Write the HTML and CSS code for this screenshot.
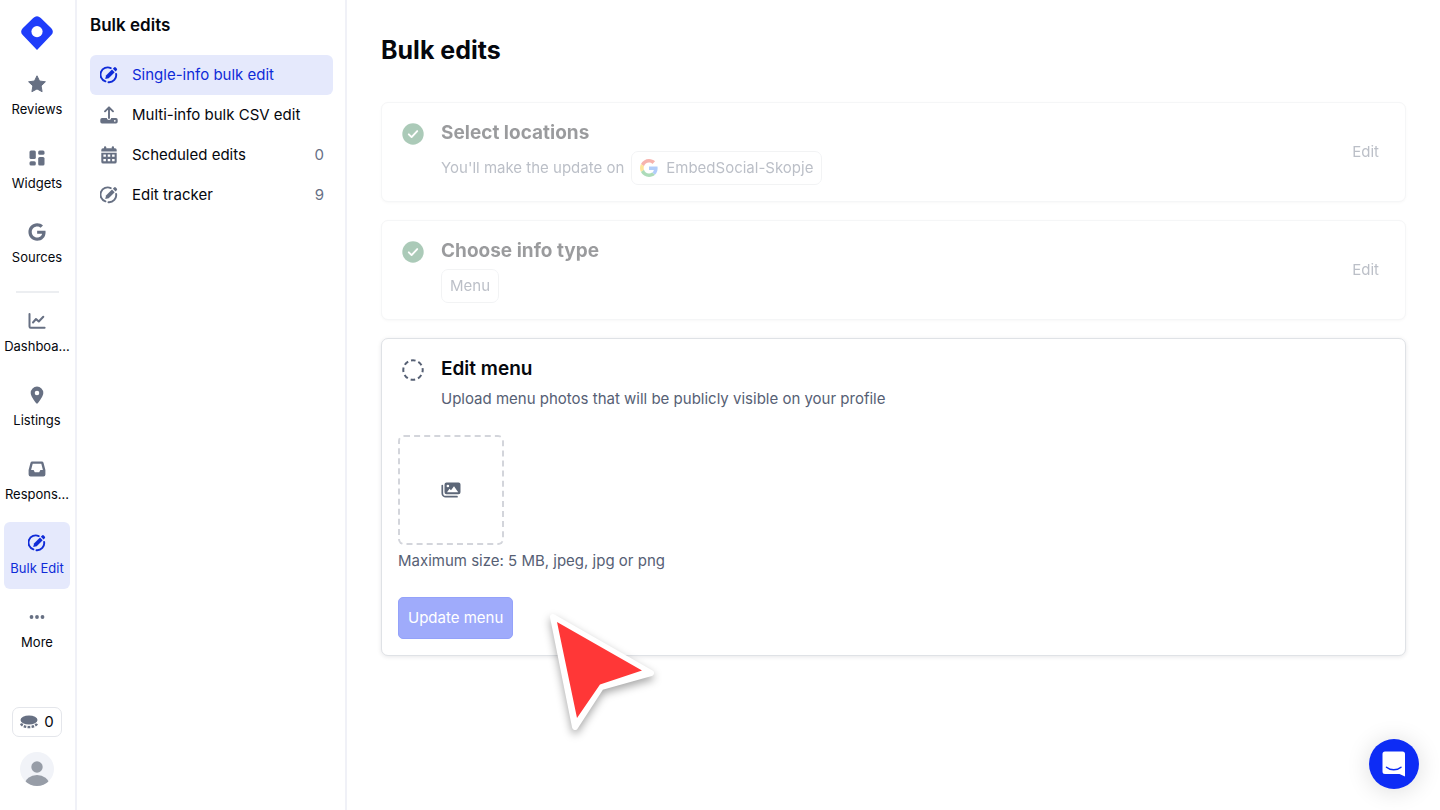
FILE: index.html
```
<!DOCTYPE html>
<html lang="en">
<head>
<meta charset="utf-8">
<title>Bulk edits</title>
<link rel="stylesheet" href="styles.css">
</head>
<body>
<svg class="sprite" aria-hidden="true">
  <symbol id="i-bulk" viewBox="0 0 20 20">
    <path d="M11.9 2.25A8 8 0 1 0 6 17.1M9.4 18A8 8 0 0 0 17.9 8.7" fill="none" stroke="currentColor" stroke-width="2.1" stroke-linecap="round"/>
    <path d="M5.8 14.5 6.7 10.6 13.3 4 16.3 7 9.7 13.6Z" fill="currentColor"/>
    <path d="m14.3 3 1.3-1.3a1.4 1.4 0 0 1 2 0l1 1a1.4 1.4 0 0 1 0 2L17.3 6Z" fill="currentColor"/>
  </symbol>
  <symbol id="i-check" viewBox="0 0 22 22">
    <circle cx="11" cy="11" r="10.7" fill="#2f7d4f"/>
    <path d="m6.8 11.3 2.8 2.8 5.6-6" fill="none" stroke="#fff" stroke-width="1.9" stroke-linecap="round" stroke-linejoin="round"/>
  </symbol>
</svg>
<div class="app">
  <nav class="rail" aria-label="Main">
    <a class="logo" href="#" aria-label="Home">
      <svg width="32" height="34" viewBox="0 0 32 34"><path d="M12.2 2.1Q16-1.6 19.8 2.1L30.3 12.3Q33.4 15.7 30.3 19L16 34 1.7 19Q-1.4 15.7 1.7 12.3Z" fill="#1f3dfa"/><circle cx="16" cy="15.6" r="5.6" fill="#fff"/></svg>
    </a>
    <a class="rail-item" href="#">
      <svg class="rail-icon" viewBox="0 0 18 18"><path d="m9 .8 2.5 5.2 5.9.8-4.3 4.1 1 5.8L9 13.9l-5.1 2.8 1-5.8L.6 6.8 6.5 6Z" fill="currentColor" stroke="currentColor" stroke-width="1" stroke-linejoin="round"/></svg>
      <span class="rail-label">Reviews</span>
    </a>
    <a class="rail-item" href="#">
      <svg class="rail-icon" viewBox="0 0 18 18" fill="currentColor"><rect x="1.5" y="1.5" width="6.3" height="8.4" rx="1.5"/><rect x="10.2" y="1.5" width="6.3" height="4.2" rx="1.5"/><rect x="1.5" y="12.3" width="6.3" height="4.2" rx="1.5"/><rect x="10.2" y="8.1" width="6.3" height="8.4" rx="1.5"/></svg>
      <span class="rail-label">Widgets</span>
    </a>
    <a class="rail-item" href="#">
      <svg class="rail-icon" viewBox="-8 0 504 512"><path fill="currentColor" d="M488 261.800C488 403.300 391.100 504 248 504 110.800 504 0 393.200 0 256S110.800 8 248 8c66.800 0 123 24.500 166.300 64.900l-67.500 64.900C258.500 52.600 94.300 116.600 94.300 256c0 86.500 69.100 156.600 153.700 156.600 98.200 0 135-70.400 140.800-106.900H248v-85.300h236.100c2.300 12.700 3.900 24.900 3.900 41.400z"/></svg>
      <span class="rail-label">Sources</span>
    </a>
    <hr class="rail-rule">
    <a class="rail-item" href="#">
      <svg class="rail-icon" viewBox="0 0 18 18" fill="none" stroke="currentColor" stroke-width="2" stroke-linecap="round" stroke-linejoin="round"><path d="M1.500 2v12.500a1.200 1.200 0 0 0 1.200 1.200H16.600M5 10.500l3-3.500 2.800 2.500L15.300 4.700"/></svg>
      <span class="rail-label">Dashboa...</span>
    </a>
    <a class="rail-item" href="#">
      <svg class="rail-icon" viewBox="0 0 18 18"><path fill="currentColor" fill-rule="evenodd" d="M9 .6a6.300 6.300 0 0 1 6.300 6.300c0 3-3.700 7.900-5.400 10.200a1.100 1.100 0 0 1-1.800 0C6.400 14.800 2.700 9.900 2.700 6.900A6.300 6.300 0 0 1 9 .6Zm0 4.100a2.300 2.300 0 1 0 0 4.600 2.300 2.300 0 0 0 0-4.600Z"/></svg>
      <span class="rail-label">Listings</span>
    </a>
    <a class="rail-item" href="#">
      <svg class="rail-icon" viewBox="0 0 18 18"><path fill="currentColor" fill-rule="evenodd" d="M4.200 1.500h9.600a1.800 1.800 0 0 1 1.700 1.300L17.400 10v4.500a2 2 0 0 1-2 2H2.600a2 2 0 0 1-2-2V10L2.500 2.800a1.800 1.800 0 0 1 1.700-1.300Zm.5 2.200L3.100 10h2.500l1.200 2.200h4.400l1.200-2.200h2.500l-1.600-6.300Z"/></svg>
      <span class="rail-label">Respons...</span>
    </a>
    <a class="rail-item active" href="#" aria-current="page">
      <svg class="rail-icon"><use href="#i-bulk"/></svg>
      <span class="rail-label">Bulk Edit</span>
    </a>
    <a class="rail-item" href="#">
      <svg class="rail-icon" viewBox="0 0 18 18" fill="currentColor"><circle cx="3.500" cy="9" r="1.900"/><circle cx="9" cy="9" r="1.900"/><circle cx="14.500" cy="9" r="1.900"/></svg>
      <span class="rail-label">More</span>
    </a>
    <div class="rail-foot">
      <button class="credits" type="button" aria-label="Credits: 0">
        <svg width="18" height="14" viewBox="0 0 18 14"><ellipse cx="9" cy="5" rx="8.500" ry="4.500" fill="currentColor"/><path d="M1 8.500C3 13.300 15 13.300 17 8.500" fill="none" stroke="currentColor" stroke-width="2.400" stroke-dasharray="2.600 1.300"/></svg>
        <span>0</span>
      </button>
      <button class="avatar" type="button" aria-label="Account">
        <svg width="34" height="34" viewBox="0 0 34 34"><clipPath id="round"><circle cx="17" cy="17" r="17"/></clipPath><g clip-path="url(#round)"><rect width="34" height="34" fill="#f1f3f8"/><circle cx="17" cy="15" r="5.700" fill="#979da7"/><ellipse cx="17" cy="32" rx="12" ry="9" fill="#979da7"/></g></svg>
      </button>
    </div>
  </nav>

  <aside class="panel">
    <h2 class="panel-title">Bulk edits</h2>
    <nav class="menu" aria-label="Bulk edits">
      <a class="menu-item active" href="#" aria-current="page"><svg class="menu-icon"><use href="#i-bulk"/></svg><span>Single-info bulk edit</span></a>
      <a class="menu-item" href="#"><svg class="menu-icon" viewBox="0 0 18 18"><path d="M9 12V2M5 5.300 9 1.300l4 4" fill="none" stroke="currentColor" stroke-width="1.900" stroke-linecap="round" stroke-linejoin="round"/><path fill="currentColor" fill-rule="evenodd" d="M2 12h4.800c.3 2.600 4.100 2.600 4.400 0H16a1.700 1.700 0 0 1 1.700 1.700v2.100A1.700 1.700 0 0 1 16 17.500H2a1.700 1.700 0 0 1-1.700-1.700v-2.100A1.700 1.700 0 0 1 2 12Zm12.800 1.900a.9.900 0 1 0 0 1.800.9.900 0 0 0 0-1.800Z"/></svg><span>Multi-info bulk CSV edit</span></a>
      <a class="menu-item" href="#"><svg class="menu-icon" viewBox="0 0 18 18"><g fill="currentColor"><rect x="4" y=".3" width="2.200" height="4" rx="1"/><rect x="11.800" y=".3" width="2.200" height="4" rx="1"/><path d="M3 2.300h12a1.700 1.700 0 0 1 1.700 1.700v1.500H1.300V4A1.700 1.700 0 0 1 3 2.300Z"/><path d="M1.300 6.700h15.400v9a1.900 1.900 0 0 1-1.900 1.900H3.200a1.900 1.900 0 0 1-1.900-1.900Z"/></g><path fill="#fff" d="M3.400 8.600h2.500v2.200H3.400zm4.350 0h2.500v2.200h-2.500zm4.350 0h2.500v2.200h-2.500zM3.400 13h2.500v2.200H3.400zm4.350 0h2.500v2.200h-2.500zm4.350 0h2.500v2.200h-2.500z"/></svg><span>Scheduled edits</span><span class="count">0</span></a>
      <a class="menu-item" href="#"><svg class="menu-icon"><use href="#i-bulk"/></svg><span>Edit tracker</span><span class="count">9</span></a>
    </nav>
  </aside>

  <main class="main">
    <h1 class="page-title">Bulk edits</h1>
    <div class="steps">
      <section class="card">
        <div class="step done">
          <svg class="step-icon"><use href="#i-check"/></svg>
          <div class="step-body">
            <h3 class="step-title">Select locations</h3>
            <div class="step-row"><span>You'll make the update on</span>
              <span class="chip"><svg width="18" height="18" viewBox="0 0 48 48"><path fill="#ea4335" d="M24 9.500c3.540 0 6.710 1.220 9.210 3.600l6.850-6.850C35.900 2.380 30.470 0 24 0 14.620 0 6.510 5.380 2.560 13.220l7.980 6.190C12.430 13.720 17.740 9.500 24 9.500z"/><path fill="#4285f4" d="M46.980 24.550c0-1.570-.15-3.090-.38-4.550H24v9.020h12.940c-.58 2.960-2.260 5.480-4.780 7.180l7.730 6c4.510-4.180 7.090-10.360 7.090-17.650z"/><path fill="#fbbc05" d="M10.530 28.590c-.48-1.450-.76-2.990-.76-4.590s.27-3.140.76-4.590l-7.980-6.190C.92 16.460 0 20.120 0 24c0 3.880.92 7.540 2.560 10.780l7.970-6.190z"/><path fill="#34a853" d="M24 48c6.480 0 11.930-2.130 15.890-5.810l-7.730-6c-2.150 1.450-4.920 2.300-8.160 2.300-6.260 0-11.570-4.220-13.470-9.910l-7.980 6.190C6.510 42.620 14.620 48 24 48z"/></svg><span>EmbedSocial-Skopje</span></span>
            </div>
          </div>
          <button class="edit" type="button">Edit</button>
        </div>
      </section>
      <section class="card">
        <div class="step done">
          <svg class="step-icon"><use href="#i-check"/></svg>
          <div class="step-body">
            <h3 class="step-title">Choose info type</h3>
            <div class="step-row"><span class="chip">Menu</span></div>
          </div>
          <button class="edit" type="button">Edit</button>
        </div>
      </section>
      <section class="card current">
        <div class="step">
          <svg class="step-icon" viewBox="0 0 22 22"><circle cx="11" cy="11" r="9.700" fill="none" stroke="currentColor" stroke-width="2" stroke-dasharray="4.600 3.018" stroke-dashoffset="2.300" stroke-linecap="butt"/></svg>
          <div class="step-body">
            <h3 class="step-title">Edit menu</h3>
            <p class="step-text">Upload menu photos that will be publicly visible on your profile</p>
          </div>
        </div>
        <button class="dropzone" type="button" aria-label="Upload menu photos">
          <svg width="20" height="16" viewBox="0 0 20 16"><path d="M1.300 3.500v7.800a3.400 3.400 0 0 0 3.400 3.400H16" fill="none" stroke="currentColor" stroke-width="1.700" stroke-linecap="round"/><path fill="currentColor" fill-rule="evenodd" d="M5.500.5h12A2 2 0 0 1 19.500 2.500v7.700a2 2 0 0 1-2 2h-12a2 2 0 0 1-2-2V2.500a2 2 0 0 1 2-2Zm.5 9.700h11.200L13 4.200l-3 4-1.500-1.500Zm.9-7.500a1.300 1.300 0 1 0 0 2.600 1.300 1.300 0 0 0 0-2.600Z"/></svg>
        </button>
        <p class="hint">Maximum size: 5 MB, jpeg, jpg or png</p>
        <button class="primary" type="button" disabled>Update menu</button>
      </section>
    </div>
  </main>
</div>

<svg class="pointer" width="130" height="140" viewBox="0 0 130 140" aria-hidden="true">
  <path d="M13 17 111 73 61 87 35 127Z" fill="#fff" stroke="#fff" stroke-width="6" stroke-linejoin="round"/>
  <path d="M17 22 102 70.500 60 84.500 37 118Z" fill="#ff3737"/>
</svg>
<button class="chat" type="button" aria-label="Open chat">
  <svg width="24" height="26" viewBox="0 0 24 26"><path d="M3 .5h17.500a2.500 2.500 0 0 1 2.500 2.500v22.500L17.500 23H3A2.500 2.500 0 0 1 .5 20.500V3A2.500 2.500 0 0 1 3 .5Z" fill="#fff"/><path d="M4.500 16.200c4 3.500 10.500 3.500 14.500 0" fill="none" stroke="#0d2cf5" stroke-width="1.500" stroke-linecap="round"/></svg>
</button>
</body>
</html>
```
FILE: styles.css
```
* { box-sizing: border-box; }

body {
  margin: 0;
  background: #fff;
  color: #05070d;
  font: 15px/24px Inter, "Liberation Sans", sans-serif;
}

h1, h2, h3, p { margin: 0; }
a { color: inherit; text-decoration: none; }
button { font: inherit; color: inherit; cursor: pointer; }
svg { display: block; flex: none; }
.sprite { position: absolute; width: 0; height: 0; }

.app { display: flex; min-height: 100vh; }

/* Icon rail */
.rail {
  display: flex;
  flex-direction: column;
  align-items: center;
  gap: 7px;
  width: 77px;
  padding: 16px 5px 24px 4px;
  border-right: 2px solid #f0f1f7;
}
.logo { margin-bottom: 6px; }
.rail-item {
  display: flex;
  flex-direction: column;
  align-items: center;
  gap: 6px;
  width: 100%;
  height: 67px;
  padding-top: 12px;
  border-radius: 6px;
}
.rail-icon { width: 18px; height: 18px; color: #677083; }
.rail-label { font-size: 13px; line-height: 20px; white-space: nowrap; }
.rail-item.active { background: #e5e9fc; color: #0f2bd8; }
.rail-item.active .rail-icon { color: #0f2bd8; }
.rail-rule { width: 43px; height: 2px; margin: 6px 0 0; border: 0; background: #eceef1; }
.rail-foot {
  display: flex;
  flex-direction: column;
  align-items: center;
  gap: 15px;
  margin-top: auto;
}
.credits {
  display: flex;
  align-items: center;
  justify-content: center;
  gap: 6px;
  width: 50px;
  height: 30px;
  padding: 0;
  border: 1px solid #e4e6eb;
  border-radius: 7px;
  background: #fff;
}
.credits svg { color: #677083; }
.avatar { padding: 0; border: 0; border-radius: 50%; background: none; }

/* Section menu */
.panel { width: 270px; padding: 13px 12px 0 13px; border-right: 2px solid #f0f1f7; }
.panel-title { font-size: 17px; line-height: 24px; font-weight: 600; }
.menu { margin-top: 18px; }
.menu-item {
  display: flex;
  align-items: center;
  gap: 14px;
  height: 40px;
  padding: 0 9px 0 10px;
  border-radius: 6px;
}
.menu-icon { width: 18px; height: 18px; color: #677083; }
.menu-item.active { background: #e5e9fc; color: #0f2bd8; }
.menu-item.active .menu-icon { color: #0f2bd8; }
.count { margin-left: auto; color: #667085; }

/* Content */
.main { flex: 1; min-width: 0; padding: 34px 34px 34px; }
.page-title { font-size: 25px; line-height: 32px; font-weight: 700; }
.steps { display: flex; flex-direction: column; gap: 18px; margin-top: 36px; }
.card {
  padding: 16px;
  border: 1px solid #f5f6f7;
  border-radius: 7px;
  background: #fff;
  box-shadow: 0 1px 3px rgba(16, 24, 40, 0.03);
}
.card.current { border-color: #dfe2e6; box-shadow: 0 1px 4px rgba(16, 24, 40, 0.1); }
.step { display: flex; color: #566074; }
.step.done > * { opacity: 0.4; }
.step-icon { width: 22px; height: 22px; margin: 4px 17px 0 4px; }
.step-body { flex: 1; }
.step-title { font-size: 19px; line-height: 28px; font-weight: 600; color: #05070d; }
.step.done .step-title { font-weight: 700; }
.step-row { display: flex; align-items: center; gap: 7px; height: 34px; margin-top: 4px; }
.step-text { margin-top: 4px; }
.chip {
  display: flex;
  align-items: center;
  gap: 8px;
  height: 34px;
  padding: 0 8px;
  border: 1px solid #dfe2e6;
  border-radius: 7px;
}
.edit { align-self: center; padding: 8px 10px; border: 0; background: none; }
.dropzone {
  display: flex;
  align-items: center;
  justify-content: center;
  width: 106px;
  height: 110px;
  margin-top: 24px;
  border: 2px dashed #d3d5db;
  border-radius: 6px;
  background: none;
  color: #5d6778;
}
.hint { margin-top: 4px; color: #566074; }
.primary {
  height: 42px;
  margin-top: 24px;
  padding: 0 9px;
  border: 1px solid #94a2fa;
  border-radius: 5px;
  background: #9fabfb;
  color: #fff;
}

/* Overlays */
.pointer {
  position: absolute;
  left: 540px;
  top: 600px;
  overflow: visible;
  pointer-events: none;
  filter: drop-shadow(0 4px 4px rgba(0, 0, 0, 0.35));
}
.chat {
  position: fixed;
  right: 21px;
  bottom: 21px;
  display: grid;
  place-items: center;
  width: 50px;
  height: 50px;
  padding: 0;
  border: 0;
  border-radius: 50%;
  background: #0d2cf5;
  box-shadow: 0 2px 24px rgba(0, 0, 0, 0.14);
}
```
